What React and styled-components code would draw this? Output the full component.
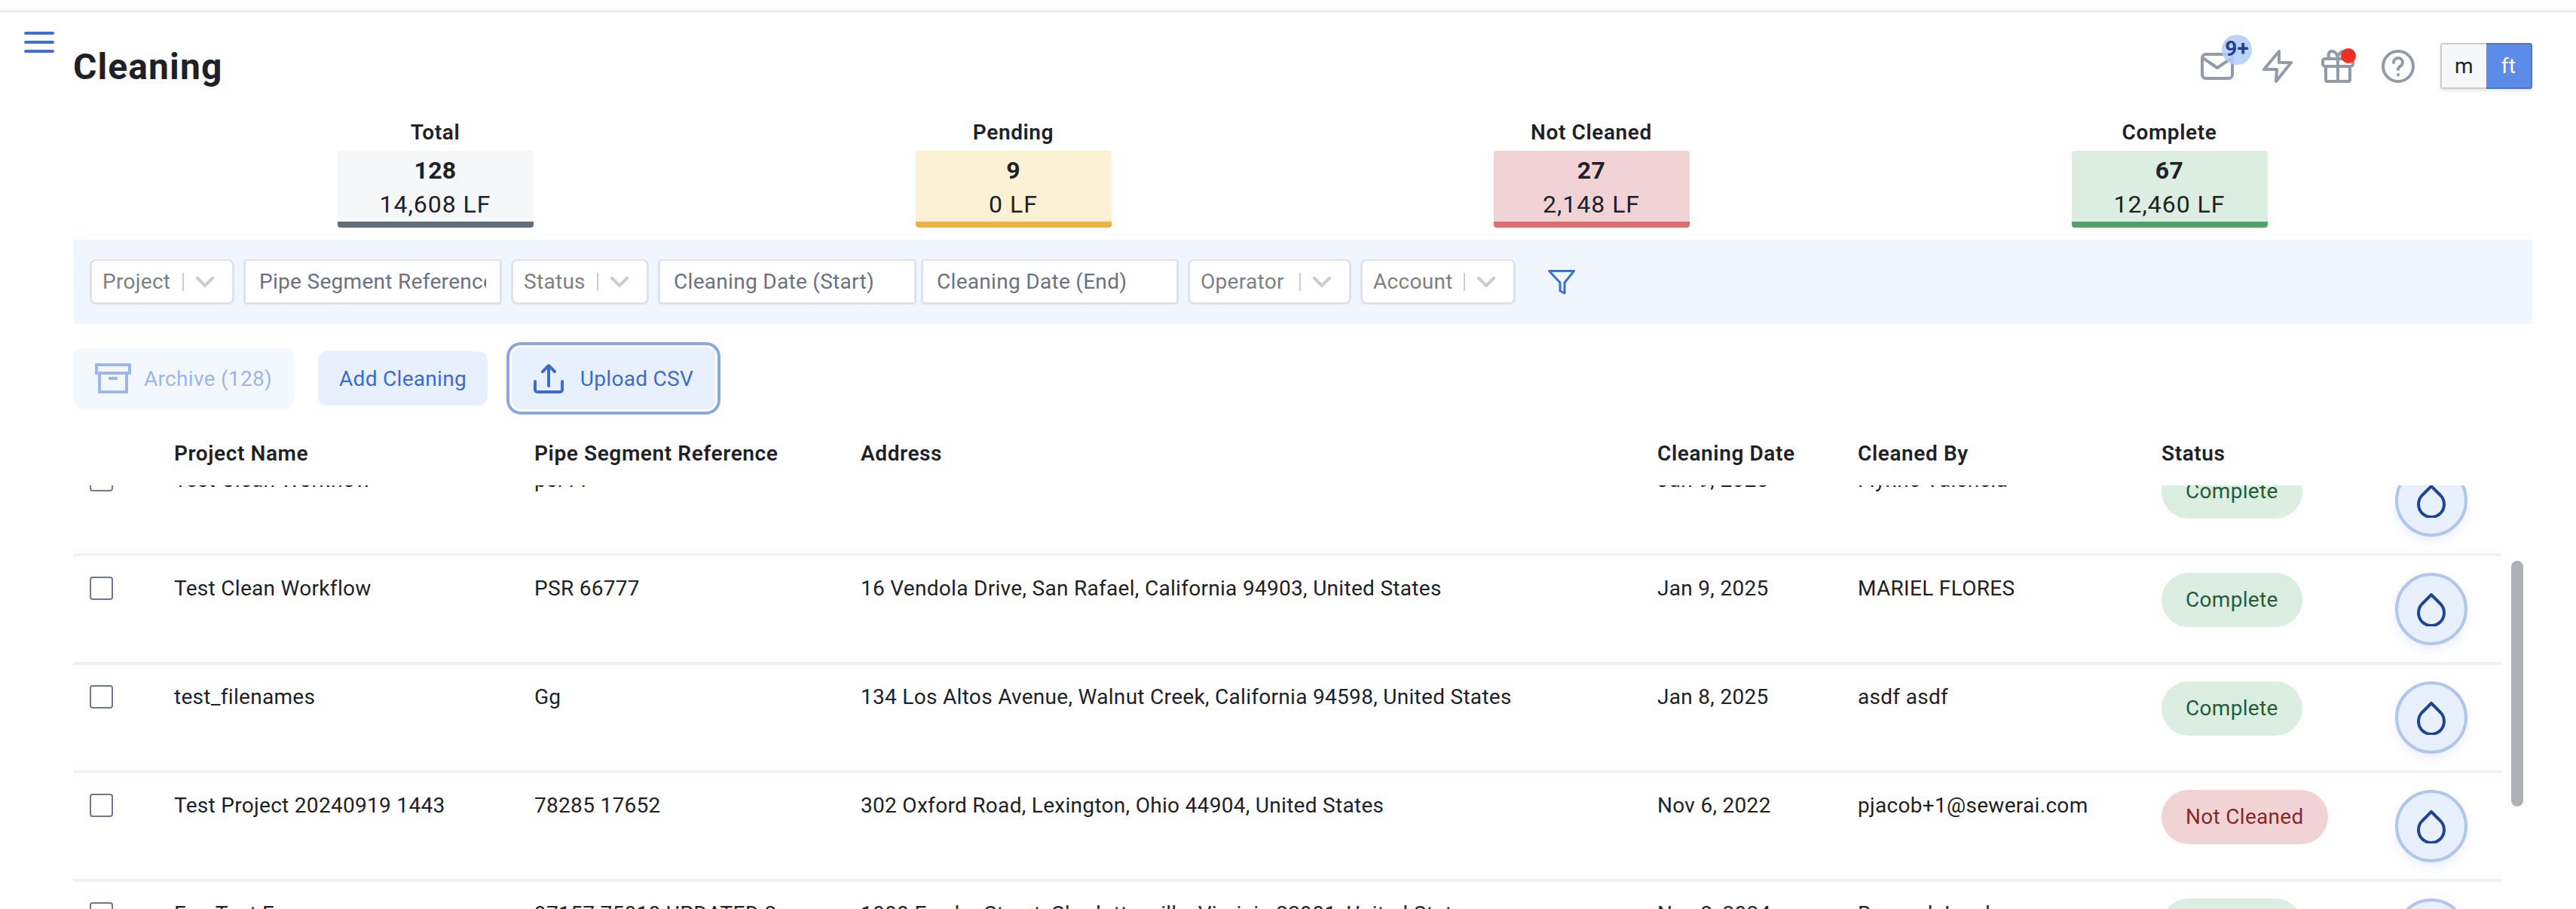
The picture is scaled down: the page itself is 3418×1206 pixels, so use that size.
import React from "react";
import styled, { createGlobalStyle } from "styled-components";

const stats = [
  { label: "Total", count: "128", length: "14,608 LF", bg: "#f6f7f9", bar: "#636c7a" },
  { label: "Pending", count: "9", length: "0 LF", bg: "#fcf0d5", bar: "#e7b547" },
  { label: "Not Cleaned", count: "27", length: "2,148 LF", bg: "#f2d3d5", bar: "#d96f6f" },
  { label: "Complete", count: "67", length: "12,460 LF", bg: "#dbeee1", bar: "#54a16a" },
];

const rows = [
  { name: "Test Clean Workflow", ref: "psr11", address: "", date: "Jan 9, 2025", by: "Flynne Valencia", status: "Complete" },
  { name: "Test Clean Workflow", ref: "PSR 66777", address: "16 Vendola Drive, San Rafael, California 94903, United States", date: "Jan 9, 2025", by: "MARIEL FLORES", status: "Complete" },
  { name: "test_filenames", ref: "Gg", address: "134 Los Altos Avenue, Walnut Creek, California 94598, United States", date: "Jan 8, 2025", by: "asdf asdf", status: "Complete" },
  { name: "Test Project 20240919 1443", ref: "78285 17652", address: "302 Oxford Road, Lexington, Ohio 44904, United States", date: "Nov 6, 2022", by: "pjacob+1@sewerai.com", status: "Not Cleaned" },
  { name: "Foo Test Foo", ref: "97157 75010 UPDATED 2", address: "1000 Fowler Street, Charlottesville, Virginia 22901, United States", date: "Nov 2, 2024", by: "Bernard Jacob", status: "Complete" },
];

export default function App() {
  return (
    <>
      <GlobalStyle />
      <Shell>
        <Rail>
          <MenuButton aria-label="menu">
            <span />
            <span />
            <span />
          </MenuButton>
        </Rail>
        <Main>
          <TitleRow>
            <Title>Cleaning</Title>
            <Actions>
              <IconSlot>
                <MailIcon />
                <CountBadge>9+</CountBadge>
              </IconSlot>
              <BoltIcon />
              <IconSlot>
                <GiftIcon />
                <RedDot />
              </IconSlot>
              <HelpIcon />
              <UnitToggle>
                <UnitOption>m</UnitOption>
                <UnitOption $active>ft</UnitOption>
              </UnitToggle>
            </Actions>
          </TitleRow>

          <Stats>
            {stats.map((s) => (
              <Stat key={s.label}>
                <StatLabel>{s.label}</StatLabel>
                <StatBox $bg={s.bg} $bar={s.bar}>
                  <StatCount>{s.count}</StatCount>
                  <StatLength>{s.length}</StatLength>
                </StatBox>
              </Stat>
            ))}
          </Stats>

          <FilterBar>
            <Select $w={192}>
              <SelectText>Project</SelectText>
              <SelectArrow />
            </Select>
            <TextFilter $w={343}>
              <FilterInput readOnly placeholder="Pipe Segment Reference" />
            </TextFilter>
            <Select $w={183}>
              <SelectText>Status</SelectText>
              <SelectArrow />
            </Select>
            <TextFilter $w={343}>
              <FilterInput readOnly placeholder="Cleaning Date (Start)" />
            </TextFilter>
            <DateEnd $w={342}>
              <FilterInput readOnly placeholder="Cleaning Date (End)" />
            </DateEnd>
            <Select $w={217}>
              <SelectText>Operator</SelectText>
              <SelectArrow />
            </Select>
            <Select $w={206}>
              <SelectText>Account</SelectText>
              <SelectArrow />
            </Select>
            <FunnelIcon />
          </FilterBar>

          <Toolbar>
            <ArchiveButton>
              <ArchiveIcon />
              Archive (128)
            </ArchiveButton>
            <AddButton>Add Cleaning</AddButton>
            <UploadButton>
              <UploadIcon />
              Upload CSV
            </UploadButton>
          </Toolbar>

          <HeadRow>
            <span />
            <span>Project Name</span>
            <span>Pipe Segment Reference</span>
            <span>Address</span>
            <span>Cleaning Date</span>
            <span>Cleaned By</span>
            <span>Status</span>
            <span />
          </HeadRow>

          <TableBody>
            <RowsClip>
              <RowsInner>
                {rows.map((r, i) => (
                  <Row key={i}>
                    <Checkbox />
                    <span>{r.name}</span>
                    <span>{r.ref}</span>
                    <span>{r.address}</span>
                    <span>{r.date}</span>
                    <span>{r.by}</span>
                    <div>
                      <StatusPill $bad={r.status === "Not Cleaned"}>{r.status}</StatusPill>
                    </div>
                    <DropButton>
                      <DropIcon />
                    </DropButton>
                  </Row>
                ))}
              </RowsInner>
            </RowsClip>
            <ScrollTrack>
              <ScrollThumb />
            </ScrollTrack>
          </TableBody>
        </Main>
      </Shell>
    </>
  );
}

function MailIcon() {
  return (
    <Glyph width="44" height="36" viewBox="0 0 44 36">
      <rect x="2" y="2" width="40" height="32" rx="5" />
      <path d="M3 7l19 13L41 7" />
    </Glyph>
  );
}

function BoltIcon() {
  return (
    <Glyph width="40" height="44" viewBox="0 0 40 44">
      <path d="M22 2L2 26h17l-1 16 20-25H22z" />
    </Glyph>
  );
}

function GiftIcon() {
  return (
    <Glyph width="44" height="44" viewBox="0 0 44 44">
      <rect x="2" y="12" width="40" height="10" rx="3" />
      <path d="M6 22v18a2 2 0 0 0 2 2h28a2 2 0 0 0 2-2V22M22 12v30" />
      <path d="M22 12c0-6-4-10-8-10-5 0-6 8-2 10M22 12c0-6 4-10 8-10" />
    </Glyph>
  );
}

function HelpIcon() {
  return (
    <HelpGlyph width="44" height="44" viewBox="0 0 44 44">
      <circle cx="22" cy="22" r="20" />
      <path d="M16 17a6 6 0 0 1 12 0c0 5-6 4.500-6 9" />
      <path d="M22 33v.5" />
    </HelpGlyph>
  );
}

function FunnelIcon() {
  return (
    <FunnelSvg width="36" height="33" viewBox="0 0 36 33">
      <path d="M1.500 1.500h33L22 17v14l-6-3V17z" />
    </FunnelSvg>
  );
}

function ArchiveIcon() {
  return (
    <svg width="48" height="40" viewBox="0 0 48 40" fill="none" stroke="#9db7e8" strokeWidth="4">
      <rect x="2" y="2" width="44" height="11" />
      <rect x="6" y="13" width="36" height="25" />
      <path d="M18 20h12" />
    </svg>
  );
}

function UploadIcon() {
  return (
    <svg width="40" height="40" viewBox="0 0 40 40" fill="none" stroke="#3b6ccf" strokeWidth="4" strokeLinecap="round" strokeLinejoin="round">
      <path d="M20 30V3M12 11l8-8 8 8" />
      <path d="M2 24v11a3 3 0 0 0 3 3h30a3 3 0 0 0 3-3V24" />
    </svg>
  );
}

function DropIcon() {
  return (
    <svg width="38" height="44" viewBox="0 0 38 44" fill="none" stroke="#1f4496" strokeWidth="4" strokeLinejoin="round">
      <path d="M19 2l12.500 12.500a17 17 0 1 1-25 0z" />
    </svg>
  );
}

const GlobalStyle = createGlobalStyle`
  html, body {
    margin: 0;
    height: 100%;
    overflow: hidden;
    background: #fff;
  }
  * {
    box-sizing: border-box;
  }
`;

const Shell = styled.div`
  display: grid;
  grid-template-columns: 97px 1fr;
  height: 1192px;
  margin-top: 14px;
  border-top: 2px solid #e2e2e2;
  font-family: Roboto, "Liberation Sans", sans-serif;
  font-size: 28px;
  letter-spacing: 0.3px;
  color: #1e2228;
`;

const Rail = styled.div`
  padding: 26px 0 0 32px;
`;

const MenuButton = styled.div`
  display: flex;
  flex-direction: column;
  gap: 8px;
  width: 40px;
  span {
    height: 4px;
    border-radius: 2px;
    background: #3f6fd0;
  }
`;

const Main = styled.div`
  padding: 41px 58px 0 0;
  min-width: 0;
`;

const TitleRow = styled.div`
  display: flex;
  justify-content: space-between;
  align-items: center;
  height: 61px;
`;

const Title = styled.h1`
  margin: 2px 0 0;
  font-size: 48px;
  line-height: 61px;
  font-weight: 700;
  letter-spacing: 1.1px;
`;

const Actions = styled.div`
  display: flex;
  align-items: center;
`;

const IconSlot = styled.div`
  position: relative;
  display: flex;
`;

const Glyph = styled.svg`
  fill: none;
  stroke: #949ba8;
  stroke-width: 4;
  stroke-linecap: round;
  stroke-linejoin: round;
  margin-left: 38px;
`;

const HelpGlyph = styled(Glyph)`
  margin-left: 36px;
`;

const CountBadge = styled.span`
  position: absolute;
  top: -24px;
  right: -24px;
  width: 40px;
  height: 40px;
  border-radius: 50%;
  background: rgba(176, 204, 250, 0.85);
  color: #1f4496;
  font-size: 28px;
  font-weight: 700;
  line-height: 38px;
  text-align: center;
  letter-spacing: 0;
`;

const RedDot = styled.span`
  position: absolute;
  top: -2px;
  right: -2px;
  width: 20px;
  height: 20px;
  border-radius: 50%;
  background: #ee3124;
`;

const UnitToggle = styled.div`
  display: flex;
  width: 122px;
  height: 61px;
  margin-left: 34px;
  border-radius: 4px;
  box-shadow: 0 2px 4px rgba(0, 0, 0, 0.12);
  overflow: hidden;
`;

const UnitOption = styled.div`
  flex: 1;
  display: flex;
  align-items: center;
  justify-content: center;
  background: ${(p) => (p.$active ? "#5b8de8" : "#f6f7f9")};
  color: ${(p) => (p.$active ? "#fff" : "#1e2228")};
  border: 2px solid ${(p) => (p.$active ? "#4a76cc" : "#cccccc")};
  border-right-width: ${(p) => (p.$active ? "2px" : "0")};
  border-left-width: ${(p) => (p.$active ? "0" : "2px")};
`;

const Stats = styled.div`
  display: grid;
  grid-template-columns: repeat(4, 767px);
  padding: 40px 0 0 97px;
`;

const Stat = styled.div`
  display: flex;
  flex-direction: column;
  align-items: center;
`;

const StatLabel = styled.div`
  height: 42px;
  line-height: 36px;
  font-weight: 600;
  letter-spacing: 0.6px;
`;

const StatBox = styled.div`
  width: 260px;
  height: 102px;
  padding-top: 4px;
  text-align: center;
  line-height: 45px;
  background: ${(p) => p.$bg};
  border-bottom: 8px solid ${(p) => p.$bar};
  border-radius: 4px;
  font-size: 32px;
`;

const StatCount = styled.div`
  font-weight: 700;
`;

const StatLength = styled.div`
  font-weight: 400;
  letter-spacing: 1px;
`;

const FilterBar = styled.div`
  display: flex;
  align-items: center;
  gap: 12px;
  height: 112px;
  margin-top: 16px;
  padding-left: 22px;
  background: #f1f5fe;
`;

const Field = styled.div`
  flex: none;
  display: flex;
  align-items: center;
  width: ${(p) => p.$w}px;
  height: 60px;
  background: #fff;
  border: 3px solid #dfe2e8;
  border-top-width: 2px;
  border-radius: 8px;
`;

const Select = styled(Field)`
  padding-left: 14px;
`;

const TextFilter = styled(Field)`
  padding: 0 18px;
  border-radius: 4px;
`;

const DateEnd = styled(TextFilter)`
  margin-left: -6px;
`;

const FilterInput = styled.input`
  width: 100%;
  border: 0;
  outline: 0;
  padding: 0;
  background: transparent;
  font: inherit;
  letter-spacing: inherit;
  color: #6b7280;
  &::placeholder {
    color: #6b7280;
    opacity: 1;
  }
`;

const SelectText = styled.span`
  flex: 1;
  color: #808080;
`;

const ArrowBox = styled.span`
  flex: none;
  display: flex;
  align-items: center;
  width: 66px;
  height: 24px;
  border-left: 2px solid #cccccc;
  padding-left: 16px;
`;

function SelectArrow() {
  return (
    <ArrowBox>
      <svg width="24" height="14" viewBox="0 0 24 14" fill="none" stroke="#cccccc" strokeWidth="4" strokeLinecap="round">
        <path d="M2 2l10 10L22 2" />
      </svg>
    </ArrowBox>
  );
}

const FunnelSvg = styled.svg`
  flex: none;
  margin-left: 31px;
  fill: none;
  stroke: #3f6fd0;
  stroke-width: 3;
  stroke-linejoin: round;
`;

const Toolbar = styled.div`
  display: flex;
  align-items: center;
  gap: 32px;
  margin-top: 31px;
  height: 82px;
`;

const ToolButton = styled.div`
  display: flex;
  align-items: center;
  justify-content: center;
  border-radius: 12px;
  color: #3b6ccf;
`;

const ArchiveButton = styled(ToolButton)`
  width: 293px;
  height: 80px;
  gap: 17px;
  background: #f3f7fe;
  color: #9db7e8;
`;

const AddButton = styled(ToolButton)`
  width: 225px;
  height: 72px;
  background: #e8f0fd;
`;

const UploadButton = styled(ToolButton)`
  width: 270px;
  height: 82px;
  gap: 22px;
  background: #e8f0fd;
  box-shadow: 0 0 0 3px #fff, 0 0 0 7px #8aa8de;
`;

const gridColumns = `
  display: grid;
  grid-template-columns: 112px 478px 433px 1057px 266px 403px 310px 1fr;
  padding-left: 22px;
`;

const HeadRow = styled.div`
  ${gridColumns}
  height: 101px;
  padding-top: 38px;
  line-height: 42px;
  font-weight: 600;
  letter-spacing: 0.6px;
`;

const TableBody = styled.div`
  display: flex;
  height: 562px;
`;

const RowsClip = styled.div`
  flex: none;
  width: 3223px;
  height: 100%;
  overflow: hidden;
`;

const RowsInner = styled.div`
  margin-top: -50px;
`;

const Row = styled.div`
  ${gridColumns}
  height: 144px;
  padding-top: 22px;
  line-height: 42px;
  border-bottom: 4px solid #f0f1f4;
`;

const Checkbox = styled.div`
  width: 31px;
  height: 31px;
  margin-top: 5px;
  border: 2px solid #6b7a90;
  border-radius: 4px;
  background: #fff;
`;

const StatusPill = styled.span`
  display: inline-flex;
  align-items: center;
  height: 72px;
  padding: 0 32px;
  border-radius: 36px;
  background: ${(p) => (p.$bad ? "#f2d3d5" : "#dbeee1")};
  color: ${(p) => (p.$bad ? "#842a2a" : "#255c38")};
`;

const DropButton = styled.div`
  display: flex;
  align-items: center;
  justify-content: center;
  width: 96px;
  height: 96px;
  padding-top: 2px;
  border: 4px solid #b0c6ee;
  border-radius: 50%;
  background: #e8f0fd;
  box-shadow: 0 6px 14px rgba(90, 130, 220, 0.12);
`;

const ScrollTrack = styled.div`
  flex: none;
  width: 16px;
  margin-left: 12px;
  padding-top: 100px;
`;

const ScrollThumb = styled.div`
  height: 326px;
  border-radius: 8px;
  background: #adb1b5;
`;
